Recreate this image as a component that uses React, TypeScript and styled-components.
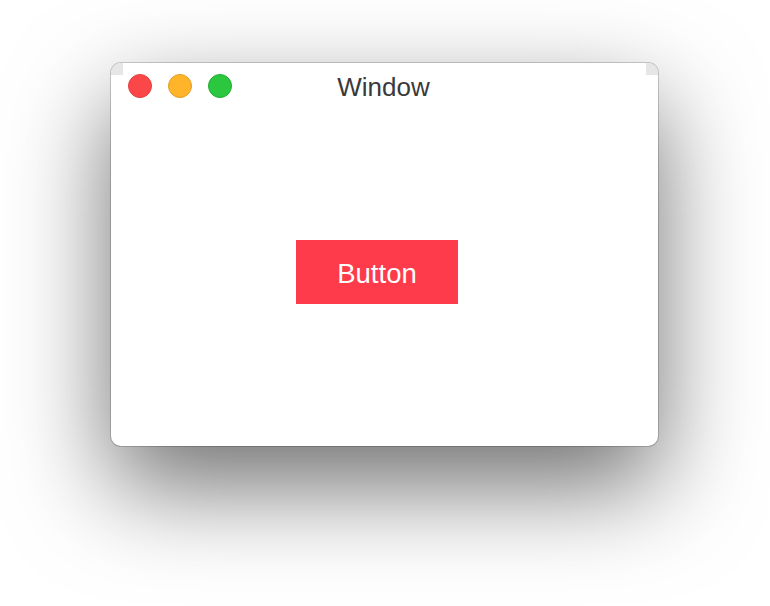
import React from "react";
import styled, { createGlobalStyle } from "styled-components";

const GlobalStyle = createGlobalStyle`
  html, body {
    margin: 0;
    padding: 0;
    background: #ffffff;
  }
  body {
    font-family: "Liberation Sans", Arial, sans-serif;
  }
`;

const Page = styled.div`
  width: 770px;
  height: 606px;
  box-sizing: border-box;
  padding: 63px 0 0 111px;
  background: #ffffff;
`;

const Window = styled.div`
  position: relative;
  width: 547px;
  height: 383px;
  display: flex;
  flex-direction: column;
  background: #ffffff;
  border-radius: 10px;
  overflow: hidden;
  box-shadow: 0 0 0 1px rgba(0, 0, 0, 0.18), 0 40px 100px rgba(0, 0, 0, 0.57);

  &::before,
  &::after {
    content: "";
    position: absolute;
    top: 0;
    width: 12px;
    height: 12px;
    background: #e6e6e6;
  }
  &::before {
    left: 0;
  }
  &::after {
    right: 0;
  }
`;

const TitleBar = styled.div`
  height: 46px;
  display: grid;
  grid-template-columns: 1fr auto 1fr;
  align-items: center;
  padding: 0 17px;
`;

const Lights = styled.div`
  display: flex;
  gap: 16px;
  align-items: center;
`;

const Light = styled.span<{ $fill: string; $edge: string }>`
  width: 24px;
  height: 24px;
  box-sizing: border-box;
  border-radius: 50%;
  background: ${(p) => p.$fill};
  border: 1px solid ${(p) => p.$edge};
`;

const Title = styled.div`
  font-size: 26px;
  color: #3a3a3a;
  line-height: 1;
  padding-top: 2px;
  margin-left: -2px;
`;

const Body = styled.div`
  flex: 1;
  display: flex;
  align-items: flex-start;
  padding: 131px 0 0 185px;
`;

const Button = styled.button`
  width: 162px;
  height: 64px;
  border: none;
  border-radius: 0;
  background: #fe3b4b;
  color: #ffffff;
  font-family: "Liberation Sans", Arial, sans-serif;
  font-size: 27.5px;
  padding: 4px 0 0;
  cursor: pointer;
`;

export default function App() {
  return (
    <>
      <GlobalStyle />
      <Page>
        <Window>
          <TitleBar>
            <Lights>
              <Light $fill="#fc4749" $edge="#e2403f" />
              <Light $fill="#ffb42a" $edge="#e09f22" />
              <Light $fill="#2ac73f" $edge="#1fae31" />
            </Lights>
            <Title>Window</Title>
            <span />
          </TitleBar>
          <Body>
            <Button>Button</Button>
          </Body>
        </Window>
      </Page>
    </>
  );
}
